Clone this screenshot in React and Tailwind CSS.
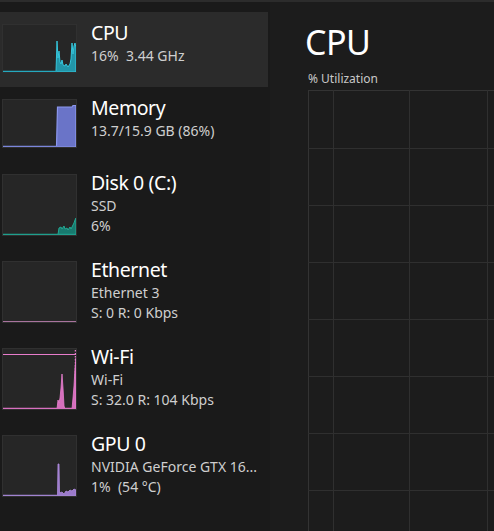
import React from "react";

function Thumb({ h, children }) {
  return (
    <div className="w-[75px] shrink-0 border border-[#303030] bg-[#262626]" style={{ height: h }}>
      <svg width="73" height={h - 2} viewBox={`1 1 73 ${h - 2}`} className="block">
        {children}
      </svg>
    </div>
  );
}

function CpuG() {
  return (
    <>
      <path d="M1 47.5 L54 47.5 L55 17 L56 34 L57 27 L58 38 L59 40 L60 36 L61 41 L63 42 L64 40 L66 43 L68 40 L69 35 L70 19 L71 30 L72 22 L73 19 L74 24 L74 48 L54 48 Z" fill="#2296a9" stroke="#35c6dc" strokeWidth="1" />
      <line x1="1" y1="47.5" x2="55" y2="47.5" stroke="#25a9bf" strokeWidth="1.5" />
    </>
  );
}

function MemG() {
  return (
    <>
      <path d="M54.5 48 L55.5 8 L70 8 L71 6.5 L74 6.5 L74 48 Z" fill="#6a74c8" stroke="#8c97ee" strokeWidth="1.2" />
      <line x1="1" y1="47.5" x2="55" y2="47.5" stroke="#7b86db" strokeWidth="1.5" />
    </>
  );
}

function DiskG() {
  return (
    <>
      <path d="M56 60.5 L57 54 L59 53 L60 55 L62 52 L63 55 L65 54 L66 56 L68 53 L69 55 L71 51 L72 49 L73 46 L74 44 L74 61 L56 61 Z" fill="#187a6f" stroke="#23a893" strokeWidth="1" />
      <line x1="1" y1="60.5" x2="74" y2="60.5" stroke="#1f9f8d" strokeWidth="1.5" />
    </>
  );
}

function EthG() {
  return <line x1="1" y1="60.5" x2="74" y2="60.5" stroke="#a8739d" strokeWidth="1.2" />;
}

function WifiG() {
  return (
    <>
      <line x1="1" y1="6.5" x2="74" y2="6.5" stroke="#e87ccb" strokeWidth="1.2" />
      <line x1="73.5" y1="2" x2="73.5" y2="60" stroke="#e87ccb" strokeWidth="1.5" strokeDasharray="1.5 1.5" />
      <path d="M55 61 L56 52 L57 55 L58 50 L59 40 L60 26 L61 40 L62 58 L63 61 Z" fill="#d66fbd" stroke="#ea80d0" strokeWidth="0.8" />
      <path d="M70 61 L71 50 L72 38 L73 20 L74 10 L74 61 Z" fill="#d66fbd" stroke="#ea80d0" strokeWidth="0.8" />
      <line x1="1" y1="60.5" x2="74" y2="60.5" stroke="#d870c0" strokeWidth="1.5" />
    </>
  );
}

function GpuG() {
  return (
    <>
      <path d="M55.5 61 L56 29 L57 29 L57.5 58 L60 57 L62 59 L64 56 L66 57 L68 55 L70 56 L72 54 L74 55 L74 61 Z" fill="#9b7acb" stroke="#b08de0" strokeWidth="0.8" />
      <line x1="1" y1="60.5" x2="74" y2="60.5" stroke="#a183d0" strokeWidth="1.5" />
    </>
  );
}

const items = [
  { title: "CPU", lines: ["16%\u00a0\u00a03.44 GHz"], G: CpuG, selected: true },
  { title: "Memory", lines: ["13.7/15.9 GB (86%)"], G: MemG },
  { title: "Disk 0 (C:)", lines: ["SSD", "6%"], G: DiskG },
  { title: "Ethernet", lines: ["Ethernet 3", "S: 0 R: 0 Kbps"], G: EthG },
  { title: "Wi-Fi", lines: ["Wi-Fi", "S: 32.0 R: 104 Kbps"], G: WifiG },
  { title: "GPU 0", lines: ["NVIDIA GeForce GTX 16...", "1%\u00a0\u00a0(54 °C)"], G: GpuG },
];

function Row({ title, lines, G, selected }) {
  const three = lines.length > 1;
  return (
    <div
      className={`flex w-[268px] items-start gap-[14px] pl-[2px] pt-[12px] ${three ? "h-[87px]" : "h-[75px]"} ${selected ? "bg-[#2b2b2b]" : ""}`}
    >
      <Thumb h={three ? 62 : 49}>
        <G />
      </Thumb>
      <div className="mt-[-4px] flex flex-col">
        <div className="text-[19.5px] leading-[26px] tracking-[-0.4px] text-white">{title}</div>
        {lines.map((l, i) => (
          <div key={i} className="whitespace-pre text-[14px] leading-[20px] text-[#cfcfcf]">
            {l}
          </div>
        ))}
      </div>
    </div>
  );
}

function Grid() {
  const hs = [148, 205, 262, 319, 376, 433, 490].map((y) => y - 90);
  const vs = [333, 409, 487].map((x) => x - 308);
  return (
    <svg width="186" height="441" className="block">
      <line x1="0.5" y1="0" x2="0.5" y2="441" stroke="#333333" />
      <line x1="0" y1="0.5" x2="186" y2="0.5" stroke="#333333" />
      {hs.map((y) => (
        <line key={y} x1="0" y1={y + 0.5} x2="186" y2={y + 0.5} stroke="#2f2f2f" />
      ))}
      {vs.map((x) => (
        <line key={x} x1={x + 0.5} y1="0" x2={x + 0.5} y2="441" stroke="#2f2f2f" />
      ))}
    </svg>
  );
}

export default function App() {
  return (
    <div
      className="flex h-[531px] w-[494px] flex-col overflow-hidden bg-[#1c1c1c]"
      style={{ fontFamily: '"Noto Sans", "Open Sans", sans-serif' }}
    >
      <div className="h-[2px] shrink-0 bg-[#2c2c2c]" />
      <div className="flex min-h-0 flex-1">
        <div className="flex w-[270px] shrink-0 flex-col bg-[#1a1a1a] pt-[10px]">
          {items.map((it) => (
            <Row key={it.title} {...it} />
          ))}
        </div>
        <div className="flex min-w-0 flex-1 flex-col pl-[35px] pt-[17px]">
          <div className="text-[34px] leading-[46px] tracking-[-0.5px] text-white">CPU</div>
          <div className="mt-[6px] pl-[3px] text-[12px] leading-[16px] text-[#c8c8c8]">% Utilization</div>
          <div className="mt-[3px] pl-[3px]">
            <Grid />
          </div>
        </div>
      </div>
    </div>
  );
}
